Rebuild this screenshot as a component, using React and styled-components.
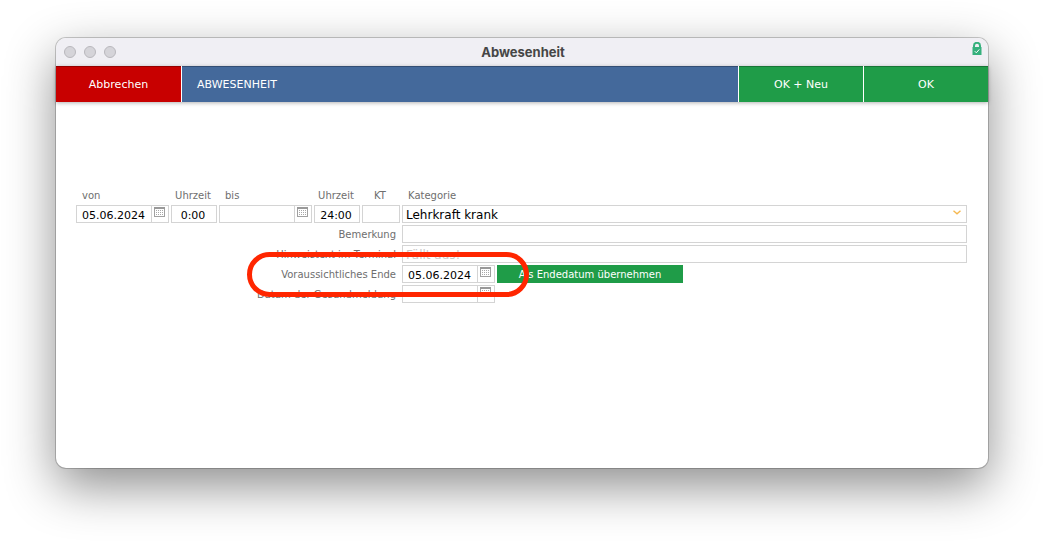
import React, { useState } from 'react';

import styled, { createGlobalStyle } from 'styled-components';

const GlobalStyle = createGlobalStyle`
  * {
    box-sizing: border-box;
  }

  body {
    margin: 0;
    background-color: #fff;
    font-family: 'DejaVu Sans', Verdana, sans-serif;
  }
`;

const CalendarIcon = () => (
  <svg width='11' height='10' viewBox='0 0 11 10' aria-hidden='true'>
    <rect x='0.5' y='0.5' width='10' height='9' fill='#fff' stroke='#a0a0a0' />
    <path d='M0 1h11' stroke='#999' strokeWidth='2' />
    <path
      d='M2 3.5h8M2 5.5h8M2 7.5h8'
      stroke='#a8a8a8'
      strokeDasharray='1 1'
    />
  </svg>
);

const LockIcon = () => (
  <svg width='10' height='14' viewBox='0 0 10 14' aria-hidden='true'>
    <path
      d='M2 6V3.8a3 3 0 0 1 6 0V6'
      fill='none'
      stroke='#35b07c'
      strokeWidth='2'
    />
    <rect x='0.5' y='5' width='9' height='8' fill='#35b07c' />
    <path d='M2.8 9.2l1.5 1.6 3-3.4' fill='none' stroke='#fff' />
  </svg>
);

const DateField = ({ id, value, onChange }) => (
  <DateBox>
    <DateInput
      id={id}
      value={value}
      onChange={(e) => onChange(e.target.value)}
    />
    <CalendarButton type='button' aria-label='Kalender'>
      <CalendarIcon />
    </CalendarButton>
  </DateBox>
);

const App = () => {
  const [form, setForm] = useState({
    von: '05.06.2024',
    vonZeit: '0:00',
    bis: '',
    bisZeit: '24:00',
    kt: '',
    kategorie: 'Lehrkraft krank',
    bemerkung: '',
    hinweis: '',
    ende: '05.06.2024',
    gesund: '',
  });

  const update = (key) => (value) => setForm({ ...form, [key]: value });
  const onInput = (key) => (e) => update(key)(e.target.value);

  return (
    <Desktop>
      <GlobalStyle />
      <Window>
        <TitleBar>
          <Lights>
            <Light />
            <Light />
            <Light />
          </Lights>
          <Title>Abwesenheit</Title>
          <LockSlot>
            <LockIcon />
          </LockSlot>
        </TitleBar>
        <Toolbar>
          <CancelButton type='button'>Abbrechen</CancelButton>
          <Heading>ABWESENHEIT</Heading>
          <ToolbarButton type='button'>OK + Neu</ToolbarButton>
          <ToolbarButton type='button'>OK</ToolbarButton>
        </Toolbar>
        <Form>
          <PeriodRow>
            <Label htmlFor='von'>von</Label>
            <CenterLabel htmlFor='vonZeit'>Uhrzeit</CenterLabel>
            <Label htmlFor='bis'>bis</Label>
            <CenterLabel htmlFor='bisZeit'>Uhrzeit</CenterLabel>
            <CenterLabel htmlFor='kt'>KT</CenterLabel>
            <Label htmlFor='kategorie'>Kategorie</Label>
            <DateField id='von' value={form.von} onChange={update('von')} />
            <TimeInput
              id='vonZeit'
              value={form.vonZeit}
              onChange={onInput('vonZeit')}
            />
            <DateField id='bis' value={form.bis} onChange={update('bis')} />
            <TimeInput
              id='bisZeit'
              value={form.bisZeit}
              onChange={onInput('bisZeit')}
            />
            <Input id='kt' value={form.kt} onChange={onInput('kt')} />
            <SelectBox>
              <Select
                id='kategorie'
                value={form.kategorie}
                onChange={onInput('kategorie')}
              >
                <option>Lehrkraft krank</option>
              </Select>
              <Chevron width='8' height='5' viewBox='0 0 8 5'>
                <path
                  d='M0.5 0.8l3.5 3 3.5-3'
                  fill='none'
                  stroke='#f5b850'
                  strokeWidth='1.4'
                />
              </Chevron>
            </SelectBox>
          </PeriodRow>
          <DetailRow>
            <SideLabel htmlFor='bemerkung'>Bemerkung</SideLabel>
            <Input
              id='bemerkung'
              value={form.bemerkung}
              onChange={onInput('bemerkung')}
            />
          </DetailRow>
          <DetailRow>
            <SideLabel htmlFor='hinweis'>Hinweistext im Terminal</SideLabel>
            <Input
              id='hinweis'
              placeholder='Fällt aus!'
              value={form.hinweis}
              onChange={onInput('hinweis')}
            />
          </DetailRow>
          <DetailRow>
            <SideLabel htmlFor='ende'>Voraussichtliches Ende</SideLabel>
            <Inline>
              <DateField id='ende' value={form.ende} onChange={update('ende')} />
              <ApplyButton
                type='button'
                onClick={() => update('bis')(form.ende)}
              >
                Als Endedatum übernehmen
              </ApplyButton>
            </Inline>
            <Marker />
          </DetailRow>
          <DetailRow>
            <SideLabel htmlFor='gesund'>Datum der Gesundmeldung</SideLabel>
            <Inline>
              <DateField
                id='gesund'
                value={form.gesund}
                onChange={update('gesund')}
              />
            </Inline>
          </DetailRow>
        </Form>
      </Window>
    </Desktop>
  );
};

const Desktop = styled.div`
  display: flex;
  min-height: 100vh;
  padding: 38px 56px 74px;
  overflow: hidden;
`;

const Window = styled.main`
  flex: 1;
  display: flex;
  flex-direction: column;
  background-color: #fff;
  border-radius: 10px;
  box-shadow: 0 0 0 1px rgba(0, 0, 0, 0.2), 0 18px 50px rgba(0, 0, 0, 0.45);
`;

const TitleBar = styled.header`
  display: grid;
  grid-template-columns: 1fr auto 1fr;
  align-items: center;
  height: 28px;
  padding: 0 6px 0 8px;
  background-color: #f0eff4;
  border-radius: 10px 10px 0 0;
`;

const Lights = styled.div`
  display: flex;
  gap: 8px;
`;

const Light = styled.span`
  width: 12px;
  height: 12px;
  background-color: #d5d4d9;
  border: 1px solid #b9b8bd;
  border-radius: 50%;
`;

const Title = styled.h1`
  margin: 0;
  color: #464646;
  font-family: Inter, sans-serif;
  font-size: 13px;
  font-weight: 700;
`;

const LockSlot = styled.span`
  display: flex;
  justify-content: flex-end;
  padding-bottom: 6px;
`;

const Toolbar = styled.div`
  display: flex;
  gap: 1px;
  height: 36px;
  background-color: #fff;
  box-shadow: 0 1px 4px rgba(0, 0, 0, 0.3);
`;

const ToolbarButton = styled.button`
  width: 124px;
  padding: 0;
  border: 0;
  border-top: 1px solid rgba(0, 0, 0, 0.25);
  background-color: #1f9c48;
  color: #fff;
  font-family: inherit;
  font-size: 11px;
`;

const CancelButton = styled(ToolbarButton)`
  width: 125px;
  background-color: #c80000;
`;

const Heading = styled.h2`
  flex: 1;
  display: flex;
  align-items: center;
  margin: 0;
  padding: 0 15px;
  border-top: 1px solid rgba(0, 0, 0, 0.25);
  background-color: #44699b;
  color: #fff;
  font-size: 11px;
  font-weight: 400;
`;

const Form = styled.form`
  display: flex;
  flex-direction: column;
  gap: 2px;
  padding: 87px 21px 20px 20px;
`;

const PeriodRow = styled.div`
  display: grid;
  grid-template-columns: 93px 46px 93px 46px 38px 1fr;
  column-gap: 2px;
  row-gap: 2px;
`;

const DetailRow = styled.div`
  display: grid;
  grid-template-columns: 324px 1fr;
  column-gap: 2px;
  position: relative;
`;

const Label = styled.label`
  padding-left: 6px;
  color: #6e6e6e;
  font-size: 10px;
  line-height: 14px;
`;

const CenterLabel = styled(Label)`
  padding: 0 2px 0 0;
  text-align: center;
`;

const SideLabel = styled(Label)`
  padding: 3px 4px 0 0;
  line-height: 14px;
  text-align: right;
`;

const Input = styled.input`
  width: 100%;
  min-width: 0;
  height: 18px;
  padding: 2px 3px 0;
  border: 1px solid #d4d4d4;
  border-radius: 0;
  background-color: #fff;
  color: #000;
  font-family: inherit;
  font-size: 12px;

  &::placeholder {
    color: #c8c8c8;
    opacity: 1;
  }
`;

const TimeInput = styled(Input)`
  padding: 2px 2px 0 0;
  font-size: 11px;
  text-align: center;
`;

const DateBox = styled.div`
  display: flex;
  width: 93px;
  height: 18px;
  border: 1px solid #d4d4d4;
`;

const DateInput = styled(Input)`
  flex: 1;
  height: 16px;
  padding: 2px 0 0 5px;
  border: 0;
  font-size: 11px;
`;

const CalendarButton = styled.button`
  display: flex;
  padding: 1px 3px 1px 2px;
  border: 0;
  border-left: 1px solid #d4d4d4;
  background-color: #fff;
`;

const SelectBox = styled.div`
  position: relative;
`;

const Select = styled.select`
  display: block;
  width: 100%;
  height: 18px;
  padding: 2px 3px 0;
  appearance: none;
  border: 1px solid #d4d4d4;
  border-radius: 0;
  background-color: #fff;
  color: #000;
  font-family: inherit;
  font-size: 12px;
`;

const Chevron = styled.svg`
  position: absolute;
  top: 5px;
  right: 6px;
  pointer-events: none;
`;

const Inline = styled.div`
  display: flex;
  gap: 2px;
`;

const ApplyButton = styled.button`
  width: 186px;
  height: 18px;
  padding: 0;
  border: 0;
  background-color: #1f9c48;
  color: #fff;
  font-family: inherit;
  font-size: 10px;
`;

/* ring that highlights the expected end date */
const Marker = styled.span`
  position: absolute;
  top: -13px;
  left: 171px;
  z-index: 1;
  width: 282px;
  height: 45px;
  border: 5px solid #ff2600;
  border-radius: 23px;
  pointer-events: none;
`;

export default App;
